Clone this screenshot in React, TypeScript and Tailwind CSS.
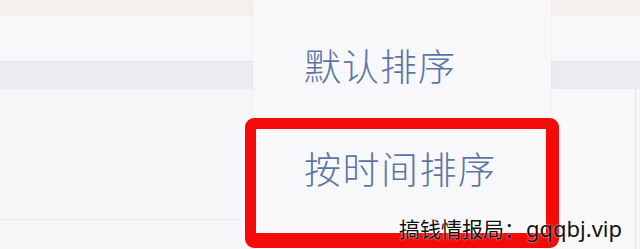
import React from 'react';

const cjk = { fontFamily: '"Noto Sans CJK SC", "Noto Sans", sans-serif' };

export default function App() {
  return (
    <div className="relative w-[640px] h-[249px] overflow-hidden bg-[#f7f7fa]" style={cjk}>
      {/* page behind the menu */}
      <div className="flex flex-col w-full">
        <div className="h-[16px] bg-[#f5f0ee]" />
        <div className="h-[46px] bg-[#f8f8fb] border-b border-[#e2e2e7]" />
        <div className="h-[27px] bg-[#ebebf0]" />
        <div className="flex h-[160px]">
          <div className="w-[240px] flex flex-col">
            <div className="h-[131px] bg-[#f7f7fa] border-b border-[#ebebef]" />
          </div>
          <div className="flex-1" />
          <div className="w-[84px] mr-[4px] bg-[#f9f9fb] border-r border-[#e6e6ea]" />
        </div>
      </div>

      {/* dropdown menu */}
      <div className="absolute left-[253px] top-0 w-[298px] h-[249px] bg-[#f8f8fb] shadow-[0_0_3px_rgba(0,0,0,0.06)] flex flex-col">
        <div className="h-[118px] flex items-center pl-[51px] pt-[12px]">
          <span className="text-[37px] font-light text-[#5b76a6] leading-none tracking-[1px]">默认排序</span>
        </div>
        <div className="flex-1 flex items-start pl-[51px] pt-[32px]">
          <span className="text-[37px] font-light text-[#5b76a6] leading-none tracking-[1.5px]">按时间排序</span>
        </div>
      </div>

      {/* red highlight */}
      <div className="absolute left-[245px] top-[118px] w-[314px] h-[130px] border-[#f50a0a] border-l-[11px] border-t-[11px] border-r-[13px] border-b-[15px] rounded-[9px]" />

      {/* watermark */}
      <div className="absolute left-[399px] top-[212px] text-[21px] leading-[32px] text-[#111] whitespace-nowrap [text-shadow:0_0_2px_#fff]">
        搞钱情报局：<span className="ml-[1px] text-[22px]" style={{ fontFamily: '"Noto Sans", "Liberation Sans", sans-serif' }}>gqqbj.vip</span>
      </div>
    </div>
  );
}
